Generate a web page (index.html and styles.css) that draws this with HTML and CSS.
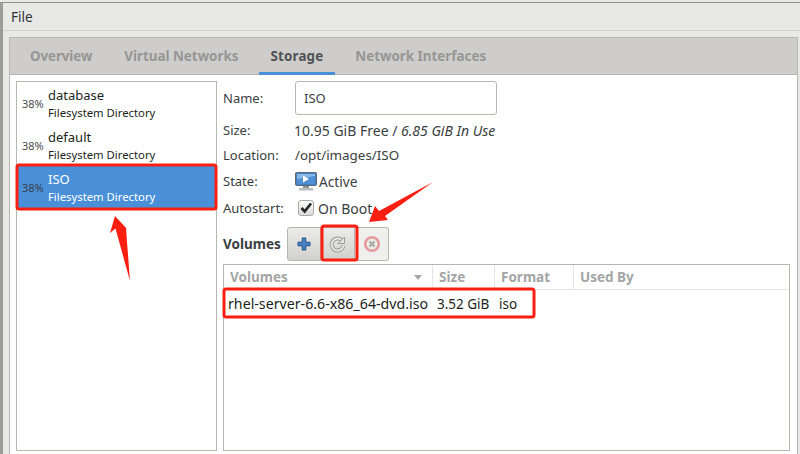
FILE: index.html
```html
<!DOCTYPE html>
<html lang="en">
<head>
<meta charset="utf-8">
<title>Storage</title>
<link rel="stylesheet" href="styles.css">
</head>
<body>
<div class="window">
  <div class="menubar"><span class="menu-item">File</span></div>
  <div class="main">
    <div class="notebook">
      <div class="tabs">
        <div class="tab tab-first">Overview</div>
        <div class="tab">Virtual Networks</div>
        <div class="tab active">Storage</div>
        <div class="tab">Network Interfaces</div>
      </div>
      <div class="page">
        <div class="pools">
          <div class="pool">
            <span class="pct">38%</span>
            <div class="pool-text"><div class="pool-name">database</div><div class="pool-type">Filesystem Directory</div></div>
          </div>
          <div class="pool">
            <span class="pct">38%</span>
            <div class="pool-text"><div class="pool-name">default</div><div class="pool-type">Filesystem Directory</div></div>
          </div>
          <div class="pool selected">
            <span class="pct">38%</span>
            <div class="pool-text"><div class="pool-name">ISO</div><div class="pool-type">Filesystem Directory</div></div>
          </div>
        </div>
        <div class="details">
          <div class="form">
            <div class="row-name"><span class="label">Name:</span><div class="entry">ISO</div></div>
            <div class="row-size"><span class="label">Size:</span><span class="size-value">10.95 GiB Free / <em>6.85 GiB In Use</em></span></div>
            <div class="row-loc"><span class="label">Location:</span><span class="loc-value">/opt/images/ISO</span></div>
            <div class="row-state"><span class="label">State:</span><span class="state">
              <svg class="monitor" width="22" height="19" viewBox="0 0 22 19"><rect x="0.5" y="0.5" width="21" height="13" rx="1" fill="#3f7fc4" stroke="#5f6a72"/><rect x="2" y="2" width="18" height="10" fill="#4f8fd3"/><path d="M2 2h18v2L2 7z" fill="#8ab8e6"/><path d="M8 3.500l6 3.500-6 3.500z" fill="#fff"/><rect x="8" y="14" width="6" height="2" fill="#8d9296"/><rect x="4" y="16" width="14" height="2.500" fill="#b9bcbd"/></svg>
              Active</span></div>
            <div class="row-auto"><span class="label">Autostart:</span><span class="auto">
              <span class="check"><svg width="14" height="14" viewBox="0 0 14 14"><path d="M2.500 7l3.200 3.400L12 2.500" fill="none" stroke="#24282a" stroke-width="2.600"/></svg></span>
              On Boot</span></div>
          </div>
          <div class="vol-bar">
            <span class="vol-title">Volumes</span>
            <div class="btn-group">
              <div class="tool-btn"><svg width="14" height="14" viewBox="0 0 14 14"><path d="M5.200 1h3.600v4.200H13v3.600H8.800V13H5.200V8.800H1V5.200h4.200z" fill="#4a7fc0" stroke="#27518f"/></svg></div>
              <div class="tool-btn"><svg width="18" height="18" viewBox="0 0 18 18"><path d="M12.800 5.200A6 6 0 1 0 14.500 10.800" fill="none" stroke="#9c9c9a" stroke-width="4"/><path d="M12.800 5.200A6 6 0 1 0 14.500 10.800" fill="none" stroke="#e6e6e4" stroke-width="2"/><path d="M15.500 2v6.500H9z" fill="#e6e6e4" stroke="#9c9c9a"/></svg></div>
              <div class="tool-btn disabled"><svg width="18" height="18" viewBox="0 0 18 18"><circle cx="9" cy="9" r="6.800" fill="#e9e9e8" stroke="#e49a9a" stroke-width="2.600"/><path d="M6.500 6.500l5 5m0-5l-5 5" stroke="#a8a8a8" stroke-width="2"/></svg></div>
            </div>
          </div>
          <div class="volumes">
            <div class="vol-head">
              <div class="col col-name">Volumes<span class="sort"></span></div>
              <div class="col col-size">Size</div>
              <div class="col col-format">Format</div>
              <div class="col col-used">Used By</div>
            </div>
            <div class="vol-row">
              <div class="cell col-name file-name">rhel-server-6.6-x86_64-dvd.iso</div>
              <div class="cell col-size">3.52 GiB</div>
              <div class="cell col-format">iso</div>
            </div>
          </div>
        </div>
      </div>
    </div>
  </div>
</div>
<svg class="marks" width="800" height="454" viewBox="0 0 800 454">
  <rect x="17" y="165" width="199" height="44" rx="2" fill="none" stroke="#fb1f12" stroke-width="3"/>
  <rect x="322" y="226" width="35" height="34" rx="2" fill="none" stroke="#fb1f12" stroke-width="3"/>
  <rect x="224" y="289" width="310" height="28" rx="2" fill="none" stroke="#fb1f12" stroke-width="3"/>
  <path d="M115 216L110 233L115.500 228.500L130 281L126 228.500L127 229z" fill="#fb1f12"/>
  <path d="M369 222L375 206L379 211L433 182L385 216L388 220z" fill="#fb1f12"/>
</svg>
</body>
</html>
```
FILE: styles.css
```css
html, body {
  margin: 0;
  padding: 0;
  width: 800px;
  height: 454px;
  overflow: hidden;
  background: #e8e8e7;
  font-family: "Noto Sans", "Open Sans", sans-serif;
  font-size: 13px;
  color: #2e3436;
}
.window {
  box-sizing: border-box;
  width: 800px;
  height: 452px;
  border-top: 1px solid #8f8f8b;
  margin-top: 2px;
  border-left: 3px solid #9c9c99;
  display: flex;
  flex-direction: column;
}
.menubar {
  height: 27px;
  flex: none;
  border-bottom: 1px solid #d3d3d1;
  display: flex;
  align-items: center;
  padding-left: 8px;
  font-size: 13.5px;
}
.menu-item { color: #2e3436; }
.main {
  flex: 1;
  padding: 6px 2px 0 6px;
  display: flex;
  min-height: 0;
}
.notebook {
  flex: 1;
  border: 1px solid #b6b6b3;
  border-bottom: 0;
  background: #fff;
  display: flex;
  flex-direction: column;
  min-width: 0;
}
.tabs {
  height: 36px;
  flex: none;
  background: #cecdcb;
  border-bottom: 1px solid #b6b6b3;
  display: flex;
  gap: 8px;
  padding-left: 8px;
}
.tab {
  padding: 0 12px;
  font-size: 13.4px;
  font-weight: 700;
  line-height: 36px;
  color: #969694;
  box-sizing: border-box;
  height: 37px;
}
.tab-first { letter-spacing: -0.1px; }
.tab.active {
  color: #4f5354;
  letter-spacing: 0.15px;
  border-bottom: 3px solid #4a90d9;
}
.page {
  flex: 1;
  min-height: 0;
  display: flex;
  gap: 6px;
  padding: 6px 7px 3px 6px;
}
.pools {
  width: 199px;
  flex: none;
  border: 1px solid #b6b6b3;
  background: #fff;
}
.pool {
  height: 42px;
  display: flex;
  align-items: center;
  color: #1c1f20;
}
.pct {
  width: 31px;
  padding-left: 5px;
  box-sizing: border-box;
  font-size: 11px;
  color: #4a4d4e;
}
.pool-text { padding-top: 1px; }
.pool-name { font-size: 13px; line-height: 18px; }
.pool-type { font-size: 11.3px; line-height: 18px; }
.pool.selected { background: #4a90d9; color: #fff; }
.pool.selected .pct { color: #38424c; }
.details {
  flex: 1;
  min-width: 0;
  display: flex;
  flex-direction: column;
}
.form { display: flex; flex-direction: column; }
.form > div {
  display: flex;
  align-items: center;
  color: #3a3e3f;
}
.label { width: 72px; flex: none; }
.row-name { height: 34px; margin-bottom: 3px; }
.entry {
  box-sizing: border-box;
  width: 202px;
  height: 34px;
  border: 1px solid #b6b6b3;
  border-radius: 3px;
  padding-left: 8px;
  line-height: 32px;
  font-size: 13px;
}
.row-size { height: 24px; }
.size-value { font-size: 14px; margin-left: -1px; }
.row-loc { height: 26px; }
.loc-value { font-size: 13.4px; }
.row-state { height: 26px; }
.row-auto { height: 28px; }
.state, .auto { display: flex; align-items: center; font-size: 13.7px; }
.monitor { margin-right: 2px; }
.auto { margin-left: 3px; gap: 4px; font-size: 14px; }
.check {
  box-sizing: border-box;
  width: 16px;
  height: 16px;
  border: 1px solid #a9a9a6;
  border-radius: 3px;
  background: linear-gradient(#fbfbfa, #dcdcda);
  display: flex;
  align-items: center;
  justify-content: center;
}
.vol-bar {
  display: flex;
  align-items: center;
  height: 34px;
  margin-top: 5px;
  margin-bottom: 3px;
}
.vol-title {
  width: 64px;
  flex: none;
  font-weight: 700;
  font-size: 13.5px;
  color: #3a3e3f;
}
.btn-group { display: flex; height: 34px; }
.tool-btn {
  box-sizing: border-box;
  width: 34px;
  height: 34px;
  border: 1px solid #b6b6b3;
  border-left-width: 0;
  background: linear-gradient(#ececea, #d0d0cd);
  display: flex;
  align-items: center;
  justify-content: center;
}
.tool-btn:first-child { border-left-width: 1px; border-radius: 3px 0 0 3px; }
.tool-btn.disabled { background: #efefee; border-radius: 0 3px 3px 0; }
.volumes {
  flex: 1;
  min-height: 0;
  border: 1px solid #b6b6b3;
  background: #fff;
}
.vol-head {
  height: 24px;
  display: flex;
  border-bottom: 1px solid #e4e4e2;
}
.col {
  box-sizing: border-box;
  font-weight: 700;
  font-size: 13.5px;
  line-height: 24px;
  color: #a3a5a5;
  border-right: 1px solid #e4e4e2;
  padding-left: 6px;
  position: relative;
}
.col-name { width: 209px; }
.col-size { width: 62px; }
.col-format { width: 79px; }
.col-used { flex: 1; border-right: 0; }
.sort {
  position: absolute;
  right: 10px;
  top: 10px;
  border-left: 4px solid transparent;
  border-right: 4px solid transparent;
  border-top: 5px solid #a3a5a5;
}
.vol-row { display: flex; height: 27px; align-items: center; }
.cell { box-sizing: border-box; padding-left: 4px; font-size: 13.5px; color: #1c1f20; }
.file-name { font-size: 14.2px; white-space: nowrap; }
.marks {
  position: absolute;
  left: 0;
  top: 0;
  pointer-events: none;
}
```
